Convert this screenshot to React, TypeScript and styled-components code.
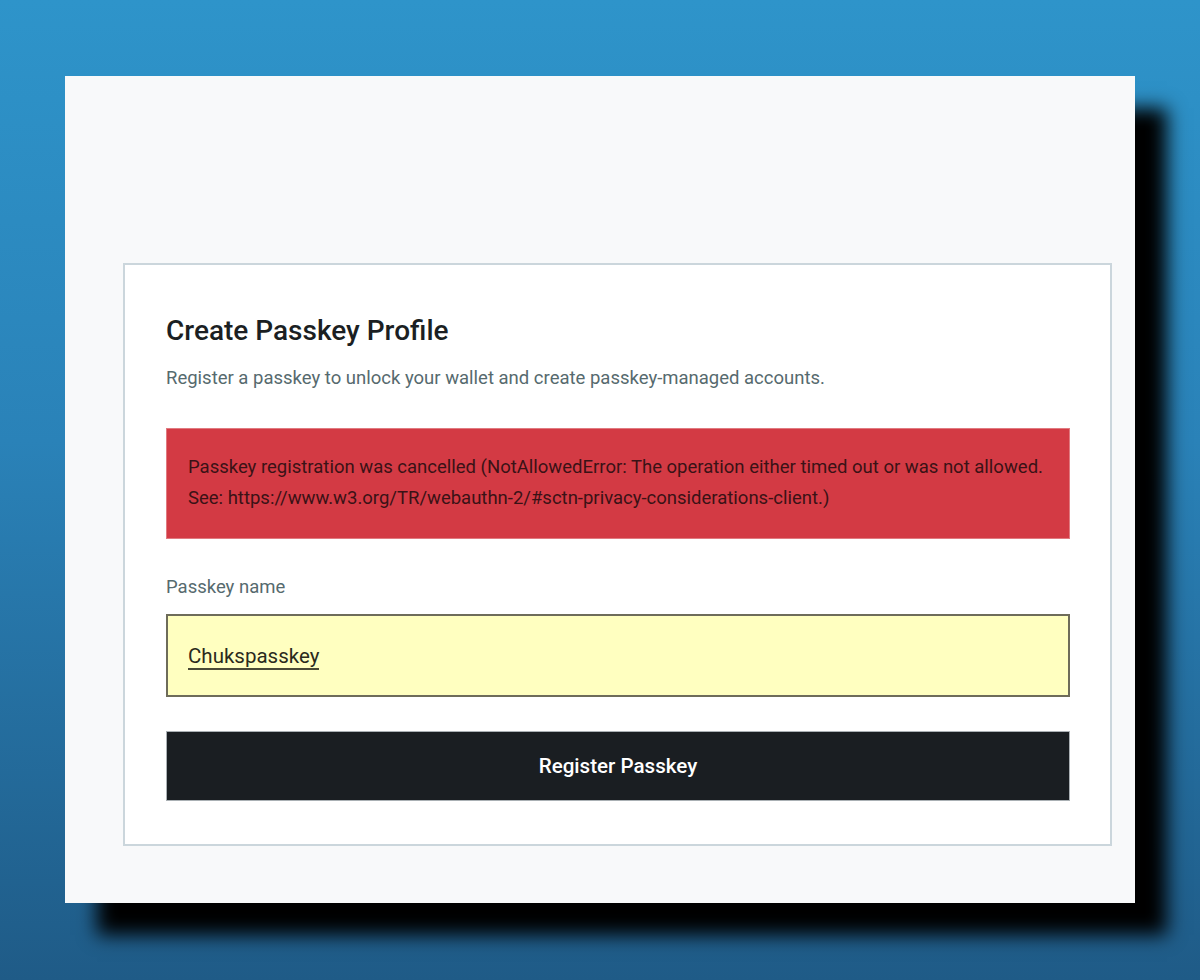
import styled, {createGlobalStyle} from 'styled-components'
import {useState} from 'react'

const GlobalStyle = createGlobalStyle`
  html, body {
    margin: 0;
    padding: 0;
  }
  body {
    font-family: Roboto, "Liberation Sans", sans-serif;
    background: linear-gradient(180deg, #2e94ca 0%, #2a82b8 45%, #1f5b87 100%);
    min-height: 980px;
    overflow: hidden;
  }
`

function App() {
    const [name] = useState<string>('Chukspasskey')
    return (
        <>
            <GlobalStyle/>
            <Page>
                <Window>
                    <Card>
                        <Title>Create Passkey Profile</Title>
                        <Subtitle>Register a passkey to unlock your wallet and create passkey-managed accounts.</Subtitle>
                        <ErrorBox>
                            Passkey registration was cancelled (NotAllowedError: The operation either timed out or was not allowed.
                            See: https://www.w3.org/TR/webauthn-2/#sctn-privacy-considerations-client.)
                        </ErrorBox>
                        <Label>Passkey name</Label>
                        <Field>
                            <FieldValue contentEditable suppressContentEditableWarning spellCheck={false}>
                                {name}
                            </FieldValue>
                        </Field>
                        <Button>Register Passkey</Button>
                    </Card>
                </Window>
            </Page>
        </>
    )
}

const Page = styled.div`
  height: 980px;
  padding: 76px 0 0 65px;
  box-sizing: border-box;
`

const Window = styled.div`
  width: 1070px;
  height: 827px;
  box-sizing: border-box;
  background-color: #f8f9fa;
  padding: 187px 23px 57px 58px;
  box-shadow: 32px 32px 18px #000;
`

const Card = styled.section`
  background-color: #fff;
  border: 2px solid #cbd6dc;
  box-sizing: border-box;
  height: 583px;
  padding: 48px 40px 0 41px;
  display: flex;
  flex-direction: column;
`

const Title = styled.h1`
  margin: 0;
  font-size: 28px;
  font-weight: 500;
  line-height: 36px;
  color: #1b1f23;
`

const Subtitle = styled.p`
  margin: 16px 0 0;
  font-size: 18.5px;
  line-height: 26px;
  color: #566a6e;
`

const ErrorBox = styled.div`
  margin-top: 37px;
  background-color: #d33a44;
  color: #3a1216;
  font-size: 18.5px;
  line-height: 31px;
  padding: 23px 21px 24px;
  border: 1px solid #e07a80;
`

const Label = styled.div`
  margin-top: 35px;
  font-size: 18.5px;
  line-height: 26px;
  color: #566a6e;
`

const Field = styled.div`
  margin-top: 14px;
  height: 83px;
  flex-shrink: 0;
  box-sizing: border-box;
  background-color: #ffffc0;
  border: 2px solid #6e6c5a;
  padding: 0 20px;
  display: flex;
  align-items: center;
`

const FieldValue = styled.span`
  font-size: 20.5px;
  line-height: 24px;
  color: #2a2a1c;
  border-bottom: 2px solid #4a4a36;
  margin-top: 3px;
  outline: none;
`

const Button = styled.button`
  margin-top: 34px;
  height: 70px;
  flex-shrink: 0;
  background-color: #1a1e22;
  border: 1px solid #aab0b4;
  color: #fff;
  font-family: Roboto, "Liberation Sans", sans-serif;
  font-size: 20.6px;
  font-weight: 500;
  cursor: pointer;
`

export default App
